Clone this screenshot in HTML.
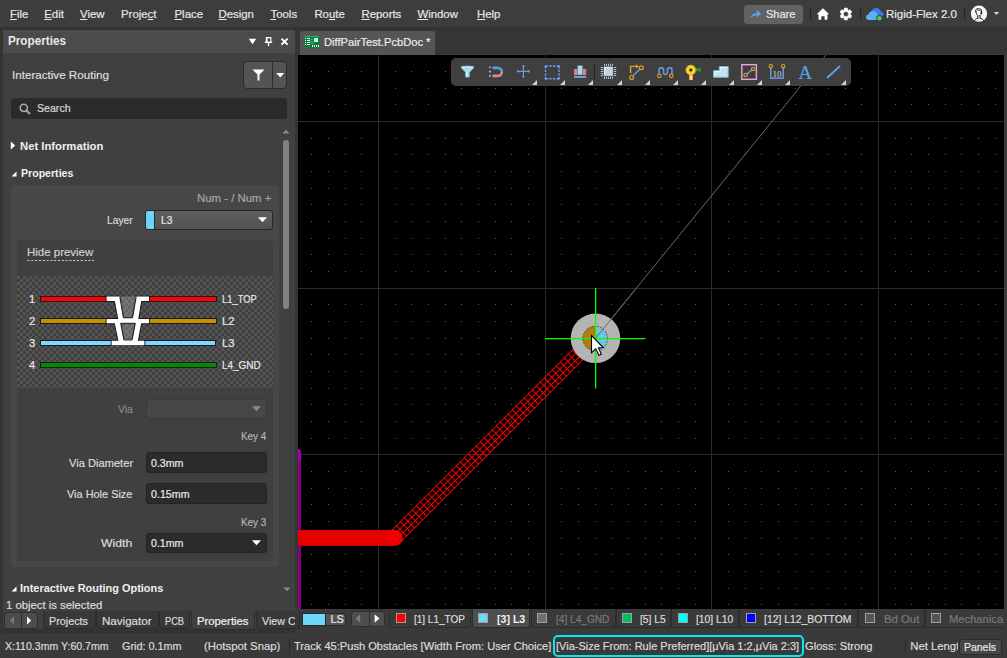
<!DOCTYPE html>
<html><head><meta charset="utf-8">
<style>
html,body{margin:0;padding:0;}
body{width:1007px;height:658px;position:relative;overflow:hidden;background:#2b2b2b;font-family:"Liberation Sans",sans-serif;}
body>div{position:absolute;}
.t{white-space:nowrap;-webkit-text-stroke:0.2px currentColor;}
.t.b{-webkit-text-stroke:0;}
u{text-decoration:underline;text-underline-offset:1px;}
</style></head><body>
<div style="left:0px;top:0px;width:1007px;height:27px;background:#3d3d3d;"></div>
<div style="left:0px;top:27px;width:1007px;height:3px;background:#333333;"></div>
<div style="left:298px;top:30px;width:709px;height:25px;background:#363636;"></div>
<div style="left:0px;top:30px;width:3px;height:603px;background:#353535;"></div>
<div style="left:3px;top:30px;width:292px;height:603px;background:#404040;"></div>
<div style="left:295px;top:30px;width:3px;height:579px;background:#353535;"></div>
<div style="left:295px;top:609px;width:3px;height:24px;background:#3a3a3a;"></div>
<div style="left:3px;top:30px;width:292px;height:23px;background:#4b4b4b;"></div>
<div style="left:298px;top:55px;width:706px;height:554px;background:#000000;"></div>
<div style="left:1004px;top:55px;width:3px;height:554px;background:#3a3a3a;"></div>
<div style="left:298px;top:609px;width:709px;height:24px;background:#3a3a3a;"></div>
<div style="left:0px;top:633px;width:1007px;height:25px;background:#3a3a3a;"></div>
<div class="t" style="left:10px;top:8.95px;font-size:11.4px;line-height:11.4px;color:#e6e6e6;font-weight:normal;"><u>F</u>ile</div>
<div class="t" style="left:44.2px;top:8.95px;font-size:11.4px;line-height:11.4px;color:#e6e6e6;font-weight:normal;"><u>E</u>dit</div>
<div class="t" style="left:80px;top:8.95px;font-size:11.4px;line-height:11.4px;color:#e6e6e6;font-weight:normal;"><u>V</u>iew</div>
<div class="t" style="left:121px;top:8.95px;font-size:11.4px;line-height:11.4px;color:#e6e6e6;font-weight:normal;">Proje<u>c</u>t</div>
<div class="t" style="left:174.5px;top:8.95px;font-size:11.4px;line-height:11.4px;color:#e6e6e6;font-weight:normal;"><u>P</u>lace</div>
<div class="t" style="left:218.4px;top:8.95px;font-size:11.4px;line-height:11.4px;color:#e6e6e6;font-weight:normal;"><u>D</u>esign</div>
<div class="t" style="left:270.5px;top:8.95px;font-size:11.4px;line-height:11.4px;color:#e6e6e6;font-weight:normal;"><u>T</u>ools</div>
<div class="t" style="left:314.4px;top:8.95px;font-size:11.4px;line-height:11.4px;color:#e6e6e6;font-weight:normal;">Ro<u>u</u>te</div>
<div class="t" style="left:361.4px;top:8.95px;font-size:11.4px;line-height:11.4px;color:#e6e6e6;font-weight:normal;"><u>R</u>eports</div>
<div class="t" style="left:417.4px;top:8.95px;font-size:11.4px;line-height:11.4px;color:#e6e6e6;font-weight:normal;"><u>W</u>indow</div>
<div class="t" style="left:477px;top:8.95px;font-size:11.4px;line-height:11.4px;color:#e6e6e6;font-weight:normal;"><u>H</u>elp</div>
<div style="left:744px;top:5px;width:59px;height:19px;background:#626262;border-radius:3px;"></div>
<svg style="position:absolute;left:750px;top:9px" width="12" height="10" viewBox="0 0 12 10"><path d="M0.3 9 C1.5 5.5 4 4.3 6.8 4.3 L6.8 1 L11.2 4.8 L6.8 8.6 L6.8 6.2 C4.2 6.2 2.2 7 0.3 9Z" fill="#4ea8f4"/></svg>
<div class="t" style="left:765.80px;top:8.38px;font-size:11.6px;line-height:11.6px;color:#e8e8e8;font-weight:normal;transform:scaleX(0.9492);transform-origin:0 0;">Share</div>
<div style="left:809.5px;top:8px;width:1.0px;height:12px;background:#242424;"></div>
<svg style="position:absolute;left:812px;top:3px" width="75" height="22" viewBox="812 3 75 22"><path d="M822.9 8.2 L829.2 14.2 H827.4 V19.8 H824.6 V16.3 H821.3 V19.8 H818.5 V14.2 H816.7Z" fill="#fff"/></svg>
<svg style="position:absolute;left:812px;top:3px" width="75" height="22" viewBox="812 3 75 22"><path d="M844.53 8.06 L847.27 8.06 L847.62 9.73 L848.73 10.38 L850.36 9.84 L851.73 12.22 L850.46 13.36 L850.46 14.64 L851.73 15.78 L850.36 18.16 L848.73 17.62 L847.62 18.27 L847.27 19.94 L844.53 19.94 L844.18 18.27 L843.07 17.62 L841.44 18.16 L840.07 15.78 L841.34 14.64 L841.34 13.36 L840.07 12.22 L841.44 9.84 L843.07 10.38 L844.18 9.73Z M848.5 14 A2.6 2.6 0 1 0 843.3 14 A2.6 2.6 0 1 0 848.5 14Z" fill="#fff" fill-rule="evenodd" stroke="#fff" stroke-width="0.6" stroke-linejoin="round"/></svg>
<div style="left:860px;top:8px;width:1px;height:12px;background:#242424;"></div>
<svg style="position:absolute;left:812px;top:3px" width="75" height="22" viewBox="812 3 75 22"><path d="M871 13 C871.3 10 873.5 8 876.2 8 C878.6 8 880.4 9.5 880.9 11.5 C882.6 11.7 883.5 13 883.3 14.6 C883.1 16 882 16.8 880.6 16.8 H873Z" fill="#3a7ee6"/><path d="M869 20.1 C867.2 20.1 866 18.9 866 17.3 C866 15.8 867.1 14.7 868.4 14.6 C868.8 12.4 870.6 10.9 872.9 10.9 C875.2 10.9 877 12.5 877.4 14.6 C879 14.7 880.3 16 880.2 17.5 C880.1 19 878.9 20.1 877.4 20.1Z" fill="#5ab0ea"/><circle cx="879.4" cy="18.2" r="3.1" fill="#3d3d3d"/><circle cx="879.4" cy="18.2" r="2.3" fill="#52c452"/></svg>
<div class="t" style="left:886.00px;top:8.38px;font-size:11.6px;line-height:11.6px;color:#e8e8e8;font-weight:normal;transform:scaleX(0.9920);transform-origin:0 0;">Rigid-Flex 2.0</div>
<div style="left:963.5px;top:8px;width:1.0px;height:12px;background:#242424;"></div>
<svg style="position:absolute;left:965px;top:0px" width="42" height="28" viewBox="965 0 42 28"><circle cx="979" cy="13.7" r="8.1" fill="#f6f6f6"/><g fill="none" stroke="#202020" stroke-width="0.9" stroke-linecap="round"><path d="M975.4 12 C975 9.8 976.3 8.6 978.3 8.6 C980.3 8.6 981.6 9.4 981.7 11"/><path d="M976.2 11.2 C976.1 13.6 976.6 15.4 978.8 16.2 C980.8 15.6 981.4 13.8 981.5 11.2"/><path d="M977.6 16 V18.2 M980.2 16 V18.2"/><path d="M974.2 20.6 C975.2 19 976.6 18.4 978.2 18.3 M979.8 18.3 C981.4 18.4 982.8 19 983.8 20.6"/><path d="M977.4 9.9 C978.6 10.5 980.2 10.4 981.2 10"/></g><ellipse cx="981.4" cy="12.8" rx="0.8" ry="1.5" fill="#202020"/><path d="M993.8 12 H999.1 L996.45 14.9Z" fill="#d8d8d8"/></svg>
<div style="left:300px;top:31px;width:135px;height:24px;background:#555555;border-radius:3px 3px 0 0;"></div>
<svg style="position:absolute;left:300px;top:32px" width="24" height="20" viewBox="300 32 24 20"><path d="M304 36 H320 V48 H311 V47 H304Z" fill="#0a7a40"/><path d="M304.5 36.5 H319.5" stroke="#2fc080" stroke-width="0.8"/><rect x="314" y="38" width="4" height="4" fill="#e8f4ee"/><rect x="315" y="39" width="2" height="2" fill="#bcd8c8"/><g fill="#f0f8f4"><rect x="305" y="38" width="1" height="1"/><rect x="305" y="40" width="1" height="1"/><rect x="305" y="42" width="1" height="1"/><rect x="305" y="44" width="1" height="1"/><rect x="307" y="38" width="3" height="1"/><rect x="307" y="40" width="3" height="1"/><rect x="307" y="42" width="3" height="1"/><rect x="307" y="44" width="3" height="1"/></g><g fill="#20c080"><rect x="310" y="39" width="3" height="1"/><rect x="310" y="41" width="3" height="1"/><rect x="311" y="43" width="3" height="1"/></g><g fill="#f8f4c0"><rect x="312" y="45" width="1" height="2"/><rect x="314" y="45" width="1" height="2"/><rect x="316" y="45" width="1" height="2"/><rect x="318" y="45" width="1" height="2"/></g></svg>
<div class="t" style="left:324.20px;top:35.88px;font-size:11.6px;line-height:11.6px;color:#ececec;font-weight:normal;transform:scaleX(0.9624);transform-origin:0 0;">DiffPairTest.PcbDoc *</div>
<div class="t b" style="left:8.00px;top:34.84px;font-size:12px;line-height:12px;color:#e8e8e8;font-weight:bold;transform:scaleX(0.9764);transform-origin:0 0;">Properties</div>
<svg style="position:absolute;left:248px;top:38px" width="9" height="7" viewBox="0 0 9 7"><path d="M0.8 0.8 H8.2 L4.5 6.2Z" fill="#fff"/></svg>
<svg style="position:absolute;left:264px;top:36px" width="9" height="11" viewBox="0 0 9 11"><path d="M1.8 1 H7.4 V6 H1.8Z M3.6 2.2 V6 H6.3 V2.2Z" fill="#fff" fill-rule="evenodd"/><rect x="0.8" y="5.6" width="7.4" height="1.4" fill="#fff"/><rect x="3.8" y="6.5" width="1.4" height="3.6" fill="#fff"/></svg>
<svg style="position:absolute;left:280px;top:37px" width="9" height="9" viewBox="0 0 9 9"><path d="M1.5 1.6 L7.6 7.6 M7.6 1.6 L1.5 7.6" stroke="#fff" stroke-width="2"/></svg>
<div class="t" style="left:11.60px;top:69.28px;font-size:11.6px;line-height:11.6px;color:#dedede;font-weight:normal;transform:scaleX(1.0026);transform-origin:0 0;">Interactive Routing</div>
<div style="left:243px;top:61px;width:44px;height:28px;background:#545454;border:1px solid #2c2c2c;border-radius:4px;box-sizing:border-box;"></div>
<div style="left:272px;top:62px;width:1px;height:26px;background:#2c2c2c;"></div>
<svg style="position:absolute;left:252px;top:69px" width="13" height="12" viewBox="0 0 13 12"><path d="M0.5 0.5 H12.5 L7.5 5.5 V11.5 H5.5 V5.5Z" fill="#fff"/></svg>
<svg style="position:absolute;left:275.5px;top:73px" width="9" height="5" viewBox="0 0 9 5"><path d="M0.2 0 H8.2 L4.2 4.4Z" fill="#fff"/></svg>
<div style="left:11px;top:98px;width:276px;height:21px;background:#2b2b2b;border-radius:3px;"></div>
<svg style="position:absolute;left:19px;top:103px" width="12" height="12" viewBox="0 0 12 12"><circle cx="4.8" cy="4.8" r="3.6" fill="none" stroke="#a8a8a8" stroke-width="1.6"/><path d="M7.5 7.5 L11 11" stroke="#a8a8a8" stroke-width="2"/></svg>
<div class="t" style="left:37.20px;top:101.98px;font-size:11.6px;line-height:11.6px;color:#dcdcdc;font-weight:normal;transform:scaleX(0.9137);transform-origin:0 0;">Search</div>
<svg style="position:absolute;left:282px;top:129px" width="8" height="5" viewBox="0 0 8 5"><path d="M0.5 4.5 H7.5 L4 0.8Z" fill="#8a8a8a"/></svg>
<div style="left:283px;top:140px;width:6px;height:169px;background:#828282;border-radius:3px;"></div>
<svg style="position:absolute;left:282.5px;top:587px" width="8" height="5" viewBox="0 0 8 5"><path d="M0.5 0.5 H7.5 L4 4.2Z" fill="#8a8a8a"/></svg>
<svg style="position:absolute;left:10px;top:141px" width="6" height="9" viewBox="0 0 6 9"><path d="M0.8 0.5 L5.2 4.5 L0.8 8.5Z" fill="#fff"/></svg>
<div class="t b" style="left:19.50px;top:140.38px;font-size:11.6px;line-height:11.6px;color:#f0f0f0;font-weight:bold;transform:scaleX(0.9729);transform-origin:0 0;">Net Information</div>
<svg style="position:absolute;left:11px;top:171px" width="6" height="6" viewBox="0 0 6 6"><path d="M5.5 0.5 V5.5 H0.5Z" fill="#fff"/></svg>
<div class="t b" style="left:20.60px;top:166.78px;font-size:11.6px;line-height:11.6px;color:#f0f0f0;font-weight:bold;transform:scaleX(0.9126);transform-origin:0 0;">Properties</div>
<div style="left:11px;top:185px;width:268px;height:382px;background:#474747;border-radius:3px;"></div>
<div class="t" style="left:197.20px;top:192.18px;font-size:11.6px;line-height:11.6px;color:#a6a6a6;font-weight:normal;transform:scaleX(0.9835);transform-origin:0 0;">Num - / Num +</div>
<div class="t" style="left:107.00px;top:213.88px;font-size:11.6px;line-height:11.6px;color:#dcdcdc;font-weight:normal;transform:scaleX(0.8828);transform-origin:0 0;">Layer</div>
<div style="left:145px;top:209.5px;width:127.5px;height:20.0px;background:linear-gradient(#5e5e5e,#525252);border:1px solid #262626;border-radius:3px;box-sizing:border-box;"></div>
<div style="left:146px;top:210.5px;width:8px;height:18.0px;background:#6dd3f7;border-radius:2px 0 0 2px;"></div>
<div style="left:154px;top:210.5px;width:1px;height:18.0px;background:#2a2a2a;"></div>
<div class="t" style="left:160.90px;top:213.68px;font-size:11.6px;line-height:11.6px;color:#e6e6e6;font-weight:normal;transform:scaleX(0.8776);transform-origin:0 0;">L3</div>
<svg style="position:absolute;left:258px;top:217px" width="9" height="6" viewBox="0 0 9 6"><path d="M0 0.3 H9 L4.5 5.3Z" fill="#fff"/></svg>
<div style="left:17px;top:240px;width:256px;height:320.5px;background:#404040;border-radius:3px;"></div>
<div class="t" style="left:27.40px;top:246.38px;font-size:11.6px;line-height:11.6px;color:#cfcfcf;font-weight:normal;transform:scaleX(0.9886);transform-origin:0 0;">Hide preview</div>
<svg style="position:absolute;left:27px;top:259px" width="68" height="2"><path d="M0.5 1.5 H67" stroke="#c4c4c4" stroke-width="1" stroke-dasharray="2.2 1.6"/></svg>
<svg style="position:absolute;left:17px;top:276px" width="256" height="112"><defs><pattern id="chk" width="6" height="6" patternUnits="userSpaceOnUse"><rect width="6" height="6" fill="#3f3f3f"/><rect x="0" y="0" width="3" height="3" fill="#545454"/><rect x="3" y="3" width="3" height="3" fill="#545454"/></pattern></defs><rect width="256" height="112" fill="url(#chk)"/></svg>
<div class="t" style="left:29px;top:293.72px;font-size:11.2px;line-height:11.2px;color:#e8e8e8;font-weight:normal;">1</div>
<div style="left:40.5px;top:296.7px;width:66.1px;height:4.5px;background:#ff0000;outline:1px solid #1a1a1a;"></div>
<div style="left:149px;top:296.7px;width:66.5px;height:4.5px;background:#ff0000;outline:1px solid #1a1a1a;"></div>
<div class="t" style="left:222.00px;top:293.38px;font-size:11.6px;line-height:11.6px;color:#e8e8e8;font-weight:normal;transform:scaleX(0.8086);transform-origin:0 0;">L1_TOP</div>
<div class="t" style="left:29px;top:315.72px;font-size:11.2px;line-height:11.2px;color:#e8e8e8;font-weight:normal;">2</div>
<div style="left:40.5px;top:318.7px;width:66.1px;height:4.5px;background:#c89000;outline:1px solid #1a1a1a;"></div>
<div style="left:149px;top:318.7px;width:66.5px;height:4.5px;background:#c89000;outline:1px solid #1a1a1a;"></div>
<div class="t" style="left:222.00px;top:315.38px;font-size:11.6px;line-height:11.6px;color:#e8e8e8;font-weight:normal;transform:scaleX(0.9708);transform-origin:0 0;">L2</div>
<div class="t" style="left:29px;top:337.72px;font-size:11.2px;line-height:11.2px;color:#e8e8e8;font-weight:normal;">3</div>
<div style="left:40.5px;top:340.7px;width:71.1px;height:4.5px;background:#7fd8ff;outline:1px solid #1a1a1a;"></div>
<div style="left:144.4px;top:340.7px;width:71.1px;height:4.5px;background:#7fd8ff;outline:1px solid #1a1a1a;"></div>
<div class="t" style="left:222.00px;top:337.38px;font-size:11.6px;line-height:11.6px;color:#e8e8e8;font-weight:normal;transform:scaleX(0.9708);transform-origin:0 0;">L3</div>
<div class="t" style="left:29px;top:359.72px;font-size:11.2px;line-height:11.2px;color:#e8e8e8;font-weight:normal;">4</div>
<div style="left:40.5px;top:362.7px;width:175.0px;height:4.5px;background:#008a00;outline:1px solid #1a1a1a;"></div>
<div class="t" style="left:222.00px;top:359.38px;font-size:11.6px;line-height:11.6px;color:#e8e8e8;font-weight:normal;transform:scaleX(0.8554);transform-origin:0 0;">L4_GND</div>
<svg style="position:absolute;left:95px;top:280px" width="60" height="75" viewBox="95 280 60 75"><path d="M106.6 296.6 H120.3 V301 H106.6Z M135.7 296.6 H149 V301 H135.7Z M114 296.6 L119.8 296.6 L123.4 317.8 L123.4 321 L118.6 321Z M136.2 296.6 L141.9 296.6 L138 321 L132.6 321 L132.6 317.8Z M123 317.8 H133 V320 H123Z M106.6 319 H149 V323.3 H106.6Z M113.9 319 L120.7 319 L120.7 323.3 L123.9 340 L123.9 342 L118.7 342Z M135.3 319 L142 319 L137.6 342 L132.1 342 L132.1 340 L135.3 323.3Z M123.5 339.5 H132.5 V342 H123.5Z M111.6 340.8 H144.4 V345.2 H111.6Z" fill="#fff" stroke="#161616" stroke-width="1.8" stroke-linejoin="miter"/><path d="M106.6 296.6 H120.3 V301 H106.6Z M135.7 296.6 H149 V301 H135.7Z M114 296.6 L119.8 296.6 L123.4 317.8 L123.4 321 L118.6 321Z M136.2 296.6 L141.9 296.6 L138 321 L132.6 321 L132.6 317.8Z M123 317.8 H133 V320 H123Z M106.6 319 H149 V323.3 H106.6Z M113.9 319 L120.7 319 L120.7 323.3 L123.9 340 L123.9 342 L118.7 342Z M135.3 319 L142 319 L137.6 342 L132.1 342 L132.1 340 L135.3 323.3Z M123.5 339.5 H132.5 V342 H123.5Z M111.6 340.8 H144.4 V345.2 H111.6Z" fill="#fff"/><path d="M119.8 296.6 L136.2 296.6 L132.6 317.8 L123.4 317.8Z" fill="#a8a8a8" fill-opacity="0.4"/><path d="M120.7 323.3 L135.3 323.3 L132.1 340 L123.9 340Z" fill="#a8a8a8" fill-opacity="0.4"/><path d="M119.8 296.6 L123.4 317.8 L132.6 317.8 L136.2 296.6" fill="none" stroke="#161616" stroke-width="0.9"/><path d="M120.7 323.3 L135.3 323.3 L132.1 340 L123.9 340Z" fill="none" stroke="#161616" stroke-width="0.9"/></svg>
<div class="t" style="left:117.70px;top:403.18px;font-size:11.6px;line-height:11.6px;color:#8a8a8a;font-weight:normal;transform:scaleX(0.8982);transform-origin:0 0;">Via</div>
<div style="left:145.5px;top:398.5px;width:121.0px;height:20.0px;background:#474747;border:1px solid #3a3a3a;border-radius:3px;box-sizing:border-box;"></div>
<svg style="position:absolute;left:252px;top:406px" width="9" height="6" viewBox="0 0 9 6"><path d="M0 0.3 H9 L4.5 5.3Z" fill="#8a8a8a"/></svg>
<div class="t" style="left:241.30px;top:430.18px;font-size:11.6px;line-height:11.6px;color:#b4b4b4;font-weight:normal;transform:scaleX(0.8520);transform-origin:0 0;">Key 4</div>
<div class="t" style="left:68.50px;top:457.08px;font-size:11.6px;line-height:11.6px;color:#dcdcdc;font-weight:normal;transform:scaleX(0.9594);transform-origin:0 0;">Via Diameter</div>
<div style="left:145.5px;top:452px;width:121.0px;height:21px;background:#2b2b2b;border:1px solid #232323;border-radius:3px;box-sizing:border-box;"></div>
<div class="t" style="left:151.30px;top:457.08px;font-size:11.6px;line-height:11.6px;color:#ececec;font-weight:normal;transform:scaleX(0.9156);transform-origin:0 0;">0.3mm</div>
<div class="t" style="left:67.20px;top:488.28px;font-size:11.6px;line-height:11.6px;color:#dcdcdc;font-weight:normal;transform:scaleX(0.9428);transform-origin:0 0;">Via Hole Size</div>
<div style="left:145.5px;top:483px;width:121.0px;height:21px;background:#2b2b2b;border:1px solid #232323;border-radius:3px;box-sizing:border-box;"></div>
<div class="t" style="left:151.30px;top:488.28px;font-size:11.6px;line-height:11.6px;color:#ececec;font-weight:normal;transform:scaleX(0.9194);transform-origin:0 0;">0.15mm</div>
<div class="t" style="left:241.30px;top:515.68px;font-size:11.6px;line-height:11.6px;color:#b4b4b4;font-weight:normal;transform:scaleX(0.8520);transform-origin:0 0;">Key 3</div>
<div class="t" style="left:101.30px;top:537.48px;font-size:11.6px;line-height:11.6px;color:#dcdcdc;font-weight:normal;transform:scaleX(1.0540);transform-origin:0 0;">Width</div>
<div style="left:145.5px;top:532.5px;width:121.0px;height:20.5px;background:#2b2b2b;border:1px solid #232323;border-radius:3px;box-sizing:border-box;"></div>
<div class="t" style="left:151.30px;top:537.48px;font-size:11.6px;line-height:11.6px;color:#ececec;font-weight:normal;transform:scaleX(0.9156);transform-origin:0 0;">0.1mm</div>
<svg style="position:absolute;left:252px;top:540px" width="9" height="6" viewBox="0 0 9 6"><path d="M0 0.3 H9 L4.5 5.3Z" fill="#fff"/></svg>
<svg style="position:absolute;left:11px;top:586px" width="6" height="6" viewBox="0 0 6 6"><path d="M5.5 0.5 V5.5 H0.5Z" fill="#fff"/></svg>
<div class="t b" style="left:19.70px;top:581.88px;font-size:11.6px;line-height:11.6px;color:#f0f0f0;font-weight:bold;transform:scaleX(0.9423);transform-origin:0 0;">Interactive Routing Options</div>
<div class="t" style="left:6.40px;top:598.88px;font-size:11.6px;line-height:11.6px;color:#dcdcdc;font-weight:normal;transform:scaleX(0.9757);transform-origin:0 0;">1 object is selected</div>
<div style="left:3px;top:629px;width:292px;height:4px;background:#333333;"></div>
<div style="left:4px;top:612px;width:34px;height:17px;background:#4c4c4c;border:1px solid #2e2e2e;border-radius:3px;box-sizing:border-box;"></div>
<div style="left:21px;top:613px;width:1px;height:15px;background:#2e2e2e;"></div>
<svg style="position:absolute;left:9px;top:616px" width="6" height="9" viewBox="0 0 6 9"><path d="M5 0.5 V8.5 L0.8 4.5Z" fill="#7a7a7a"/></svg>
<svg style="position:absolute;left:26px;top:616px" width="6" height="9" viewBox="0 0 6 9"><path d="M1 0.5 V8.5 L5.2 4.5Z" fill="#fff"/></svg>
<div style="left:43px;top:611px;width:52.5px;height:18px;background:#383838;border:1px solid #2c2c2c;border-top:none;border-radius:0 0 3px 3px;box-sizing:border-box;"></div>
<div class="t" style="left:49.30px;top:614.68px;font-size:11.6px;line-height:11.6px;color:#dcdcdc;font-weight:normal;transform:scaleX(0.9313);transform-origin:0 0;">Projects</div>
<div style="left:96px;top:611px;width:62.5px;height:18px;background:#383838;border:1px solid #2c2c2c;border-top:none;border-radius:0 0 3px 3px;box-sizing:border-box;"></div>
<div class="t" style="left:102.30px;top:614.68px;font-size:11.6px;line-height:11.6px;color:#dcdcdc;font-weight:normal;transform:scaleX(0.9990);transform-origin:0 0;">Navigator</div>
<div style="left:158.7px;top:611px;width:31.80000000000001px;height:18px;background:#383838;border:1px solid #2c2c2c;border-top:none;border-radius:0 0 3px 3px;box-sizing:border-box;"></div>
<div class="t" style="left:165.20px;top:614.68px;font-size:11.6px;line-height:11.6px;color:#dcdcdc;font-weight:normal;transform:scaleX(0.7993);transform-origin:0 0;">PCB</div>
<div style="left:190.5px;top:611px;width:64.5px;height:18.5px;background:#404040;border:1px solid #2c2c2c;border-top:none;border-radius:0 0 3px 3px;box-sizing:border-box;"></div>
<div class="t" style="left:197.00px;top:614.68px;font-size:11.6px;line-height:11.6px;color:#f2f2f2;font-weight:normal;transform:scaleX(0.9736);transform-origin:0 0;">Properties</div>
<div style="left:255.7px;top:611px;width:44.30000000000001px;height:18px;background:#383838;border:1px solid #2c2c2c;border-top:none;border-radius:0 0 3px 3px;box-sizing:border-box;"></div>
<div style="position:absolute;left:256px;top:611px;width:39px;height:18px;overflow:hidden;"><div class="t" style="position:absolute;left:6px;top:3.68px;font-size:11.6px;line-height:11.6px;color:#dcdcdc;transform:scaleX(0.92);transform-origin:0 0;">View Configuration</div></div>
<svg style="position:absolute;left:298px;top:55px" width="706" height="554"><path d="M13 16h1v1h-1zM13 33h1v1h-1zM13 49h1v1h-1zM13 66h1v1h-1zM13 83h1v1h-1zM13 99h1v1h-1zM13 116h1v1h-1zM13 133h1v1h-1zM13 149h1v1h-1zM13 166h1v1h-1zM13 183h1v1h-1zM13 199h1v1h-1zM13 216h1v1h-1zM13 233h1v1h-1zM13 249h1v1h-1zM13 266h1v1h-1zM13 283h1v1h-1zM13 299h1v1h-1zM13 316h1v1h-1zM13 333h1v1h-1zM13 349h1v1h-1zM13 366h1v1h-1zM13 383h1v1h-1zM13 399h1v1h-1zM13 416h1v1h-1zM13 433h1v1h-1zM13 449h1v1h-1zM13 466h1v1h-1zM13 483h1v1h-1zM13 499h1v1h-1zM13 516h1v1h-1zM13 533h1v1h-1zM13 549h1v1h-1zM30 16h1v1h-1zM30 33h1v1h-1zM30 49h1v1h-1zM30 66h1v1h-1zM30 83h1v1h-1zM30 99h1v1h-1zM30 116h1v1h-1zM30 133h1v1h-1zM30 149h1v1h-1zM30 166h1v1h-1zM30 183h1v1h-1zM30 199h1v1h-1zM30 216h1v1h-1zM30 233h1v1h-1zM30 249h1v1h-1zM30 266h1v1h-1zM30 283h1v1h-1zM30 299h1v1h-1zM30 316h1v1h-1zM30 333h1v1h-1zM30 349h1v1h-1zM30 366h1v1h-1zM30 383h1v1h-1zM30 399h1v1h-1zM30 416h1v1h-1zM30 433h1v1h-1zM30 449h1v1h-1zM30 466h1v1h-1zM30 483h1v1h-1zM30 499h1v1h-1zM30 516h1v1h-1zM30 533h1v1h-1zM30 549h1v1h-1zM47 16h1v1h-1zM47 33h1v1h-1zM47 49h1v1h-1zM47 66h1v1h-1zM47 83h1v1h-1zM47 99h1v1h-1zM47 116h1v1h-1zM47 133h1v1h-1zM47 149h1v1h-1zM47 166h1v1h-1zM47 183h1v1h-1zM47 199h1v1h-1zM47 216h1v1h-1zM47 233h1v1h-1zM47 249h1v1h-1zM47 266h1v1h-1zM47 283h1v1h-1zM47 299h1v1h-1zM47 316h1v1h-1zM47 333h1v1h-1zM47 349h1v1h-1zM47 366h1v1h-1zM47 383h1v1h-1zM47 399h1v1h-1zM47 416h1v1h-1zM47 433h1v1h-1zM47 449h1v1h-1zM47 466h1v1h-1zM47 483h1v1h-1zM47 499h1v1h-1zM47 516h1v1h-1zM47 533h1v1h-1zM47 549h1v1h-1zM63 16h1v1h-1zM63 33h1v1h-1zM63 49h1v1h-1zM63 66h1v1h-1zM63 83h1v1h-1zM63 99h1v1h-1zM63 116h1v1h-1zM63 133h1v1h-1zM63 149h1v1h-1zM63 166h1v1h-1zM63 183h1v1h-1zM63 199h1v1h-1zM63 216h1v1h-1zM63 233h1v1h-1zM63 249h1v1h-1zM63 266h1v1h-1zM63 283h1v1h-1zM63 299h1v1h-1zM63 316h1v1h-1zM63 333h1v1h-1zM63 349h1v1h-1zM63 366h1v1h-1zM63 383h1v1h-1zM63 399h1v1h-1zM63 416h1v1h-1zM63 433h1v1h-1zM63 449h1v1h-1zM63 466h1v1h-1zM63 483h1v1h-1zM63 499h1v1h-1zM63 516h1v1h-1zM63 533h1v1h-1zM63 549h1v1h-1zM80 16h1v1h-1zM80 33h1v1h-1zM80 49h1v1h-1zM80 66h1v1h-1zM80 83h1v1h-1zM80 99h1v1h-1zM80 116h1v1h-1zM80 133h1v1h-1zM80 149h1v1h-1zM80 166h1v1h-1zM80 183h1v1h-1zM80 199h1v1h-1zM80 216h1v1h-1zM80 233h1v1h-1zM80 249h1v1h-1zM80 266h1v1h-1zM80 283h1v1h-1zM80 299h1v1h-1zM80 316h1v1h-1zM80 333h1v1h-1zM80 349h1v1h-1zM80 366h1v1h-1zM80 383h1v1h-1zM80 399h1v1h-1zM80 416h1v1h-1zM80 433h1v1h-1zM80 449h1v1h-1zM80 466h1v1h-1zM80 483h1v1h-1zM80 499h1v1h-1zM80 516h1v1h-1zM80 533h1v1h-1zM80 549h1v1h-1zM97 16h1v1h-1zM97 33h1v1h-1zM97 49h1v1h-1zM97 66h1v1h-1zM97 83h1v1h-1zM97 99h1v1h-1zM97 116h1v1h-1zM97 133h1v1h-1zM97 149h1v1h-1zM97 166h1v1h-1zM97 183h1v1h-1zM97 199h1v1h-1zM97 216h1v1h-1zM97 233h1v1h-1zM97 249h1v1h-1zM97 266h1v1h-1zM97 283h1v1h-1zM97 299h1v1h-1zM97 316h1v1h-1zM97 333h1v1h-1zM97 349h1v1h-1zM97 366h1v1h-1zM97 383h1v1h-1zM97 399h1v1h-1zM97 416h1v1h-1zM97 433h1v1h-1zM97 449h1v1h-1zM97 466h1v1h-1zM97 483h1v1h-1zM97 499h1v1h-1zM97 516h1v1h-1zM97 533h1v1h-1zM97 549h1v1h-1zM113 16h1v1h-1zM113 33h1v1h-1zM113 49h1v1h-1zM113 66h1v1h-1zM113 83h1v1h-1zM113 99h1v1h-1zM113 116h1v1h-1zM113 133h1v1h-1zM113 149h1v1h-1zM113 166h1v1h-1zM113 183h1v1h-1zM113 199h1v1h-1zM113 216h1v1h-1zM113 233h1v1h-1zM113 249h1v1h-1zM113 266h1v1h-1zM113 283h1v1h-1zM113 299h1v1h-1zM113 316h1v1h-1zM113 333h1v1h-1zM113 349h1v1h-1zM113 366h1v1h-1zM113 383h1v1h-1zM113 399h1v1h-1zM113 416h1v1h-1zM113 433h1v1h-1zM113 449h1v1h-1zM113 466h1v1h-1zM113 483h1v1h-1zM113 499h1v1h-1zM113 516h1v1h-1zM113 533h1v1h-1zM113 549h1v1h-1zM130 16h1v1h-1zM130 33h1v1h-1zM130 49h1v1h-1zM130 66h1v1h-1zM130 83h1v1h-1zM130 99h1v1h-1zM130 116h1v1h-1zM130 133h1v1h-1zM130 149h1v1h-1zM130 166h1v1h-1zM130 183h1v1h-1zM130 199h1v1h-1zM130 216h1v1h-1zM130 233h1v1h-1zM130 249h1v1h-1zM130 266h1v1h-1zM130 283h1v1h-1zM130 299h1v1h-1zM130 316h1v1h-1zM130 333h1v1h-1zM130 349h1v1h-1zM130 366h1v1h-1zM130 383h1v1h-1zM130 399h1v1h-1zM130 416h1v1h-1zM130 433h1v1h-1zM130 449h1v1h-1zM130 466h1v1h-1zM130 483h1v1h-1zM130 499h1v1h-1zM130 516h1v1h-1zM130 533h1v1h-1zM130 549h1v1h-1zM147 16h1v1h-1zM147 33h1v1h-1zM147 49h1v1h-1zM147 66h1v1h-1zM147 83h1v1h-1zM147 99h1v1h-1zM147 116h1v1h-1zM147 133h1v1h-1zM147 149h1v1h-1zM147 166h1v1h-1zM147 183h1v1h-1zM147 199h1v1h-1zM147 216h1v1h-1zM147 233h1v1h-1zM147 249h1v1h-1zM147 266h1v1h-1zM147 283h1v1h-1zM147 299h1v1h-1zM147 316h1v1h-1zM147 333h1v1h-1zM147 349h1v1h-1zM147 366h1v1h-1zM147 383h1v1h-1zM147 399h1v1h-1zM147 416h1v1h-1zM147 433h1v1h-1zM147 449h1v1h-1zM147 466h1v1h-1zM147 483h1v1h-1zM147 499h1v1h-1zM147 516h1v1h-1zM147 533h1v1h-1zM147 549h1v1h-1zM163 16h1v1h-1zM163 33h1v1h-1zM163 49h1v1h-1zM163 66h1v1h-1zM163 83h1v1h-1zM163 99h1v1h-1zM163 116h1v1h-1zM163 133h1v1h-1zM163 149h1v1h-1zM163 166h1v1h-1zM163 183h1v1h-1zM163 199h1v1h-1zM163 216h1v1h-1zM163 233h1v1h-1zM163 249h1v1h-1zM163 266h1v1h-1zM163 283h1v1h-1zM163 299h1v1h-1zM163 316h1v1h-1zM163 333h1v1h-1zM163 349h1v1h-1zM163 366h1v1h-1zM163 383h1v1h-1zM163 399h1v1h-1zM163 416h1v1h-1zM163 433h1v1h-1zM163 449h1v1h-1zM163 466h1v1h-1zM163 483h1v1h-1zM163 499h1v1h-1zM163 516h1v1h-1zM163 533h1v1h-1zM163 549h1v1h-1zM180 16h1v1h-1zM180 33h1v1h-1zM180 49h1v1h-1zM180 66h1v1h-1zM180 83h1v1h-1zM180 99h1v1h-1zM180 116h1v1h-1zM180 133h1v1h-1zM180 149h1v1h-1zM180 166h1v1h-1zM180 183h1v1h-1zM180 199h1v1h-1zM180 216h1v1h-1zM180 233h1v1h-1zM180 249h1v1h-1zM180 266h1v1h-1zM180 283h1v1h-1zM180 299h1v1h-1zM180 316h1v1h-1zM180 333h1v1h-1zM180 349h1v1h-1zM180 366h1v1h-1zM180 383h1v1h-1zM180 399h1v1h-1zM180 416h1v1h-1zM180 433h1v1h-1zM180 449h1v1h-1zM180 466h1v1h-1zM180 483h1v1h-1zM180 499h1v1h-1zM180 516h1v1h-1zM180 533h1v1h-1zM180 549h1v1h-1zM197 16h1v1h-1zM197 33h1v1h-1zM197 49h1v1h-1zM197 66h1v1h-1zM197 83h1v1h-1zM197 99h1v1h-1zM197 116h1v1h-1zM197 133h1v1h-1zM197 149h1v1h-1zM197 166h1v1h-1zM197 183h1v1h-1zM197 199h1v1h-1zM197 216h1v1h-1zM197 233h1v1h-1zM197 249h1v1h-1zM197 266h1v1h-1zM197 283h1v1h-1zM197 299h1v1h-1zM197 316h1v1h-1zM197 333h1v1h-1zM197 349h1v1h-1zM197 366h1v1h-1zM197 383h1v1h-1zM197 399h1v1h-1zM197 416h1v1h-1zM197 433h1v1h-1zM197 449h1v1h-1zM197 466h1v1h-1zM197 483h1v1h-1zM197 499h1v1h-1zM197 516h1v1h-1zM197 533h1v1h-1zM197 549h1v1h-1zM213 16h1v1h-1zM213 33h1v1h-1zM213 49h1v1h-1zM213 66h1v1h-1zM213 83h1v1h-1zM213 99h1v1h-1zM213 116h1v1h-1zM213 133h1v1h-1zM213 149h1v1h-1zM213 166h1v1h-1zM213 183h1v1h-1zM213 199h1v1h-1zM213 216h1v1h-1zM213 233h1v1h-1zM213 249h1v1h-1zM213 266h1v1h-1zM213 283h1v1h-1zM213 299h1v1h-1zM213 316h1v1h-1zM213 333h1v1h-1zM213 349h1v1h-1zM213 366h1v1h-1zM213 383h1v1h-1zM213 399h1v1h-1zM213 416h1v1h-1zM213 433h1v1h-1zM213 449h1v1h-1zM213 466h1v1h-1zM213 483h1v1h-1zM213 499h1v1h-1zM213 516h1v1h-1zM213 533h1v1h-1zM213 549h1v1h-1zM230 16h1v1h-1zM230 33h1v1h-1zM230 49h1v1h-1zM230 66h1v1h-1zM230 83h1v1h-1zM230 99h1v1h-1zM230 116h1v1h-1zM230 133h1v1h-1zM230 149h1v1h-1zM230 166h1v1h-1zM230 183h1v1h-1zM230 199h1v1h-1zM230 216h1v1h-1zM230 233h1v1h-1zM230 249h1v1h-1zM230 266h1v1h-1zM230 283h1v1h-1zM230 299h1v1h-1zM230 316h1v1h-1zM230 333h1v1h-1zM230 349h1v1h-1zM230 366h1v1h-1zM230 383h1v1h-1zM230 399h1v1h-1zM230 416h1v1h-1zM230 433h1v1h-1zM230 449h1v1h-1zM230 466h1v1h-1zM230 483h1v1h-1zM230 499h1v1h-1zM230 516h1v1h-1zM230 533h1v1h-1zM230 549h1v1h-1zM247 16h1v1h-1zM247 33h1v1h-1zM247 49h1v1h-1zM247 66h1v1h-1zM247 83h1v1h-1zM247 99h1v1h-1zM247 116h1v1h-1zM247 133h1v1h-1zM247 149h1v1h-1zM247 166h1v1h-1zM247 183h1v1h-1zM247 199h1v1h-1zM247 216h1v1h-1zM247 233h1v1h-1zM247 249h1v1h-1zM247 266h1v1h-1zM247 283h1v1h-1zM247 299h1v1h-1zM247 316h1v1h-1zM247 333h1v1h-1zM247 349h1v1h-1zM247 366h1v1h-1zM247 383h1v1h-1zM247 399h1v1h-1zM247 416h1v1h-1zM247 433h1v1h-1zM247 449h1v1h-1zM247 466h1v1h-1zM247 483h1v1h-1zM247 499h1v1h-1zM247 516h1v1h-1zM247 533h1v1h-1zM247 549h1v1h-1zM263 16h1v1h-1zM263 33h1v1h-1zM263 49h1v1h-1zM263 66h1v1h-1zM263 83h1v1h-1zM263 99h1v1h-1zM263 116h1v1h-1zM263 133h1v1h-1zM263 149h1v1h-1zM263 166h1v1h-1zM263 183h1v1h-1zM263 199h1v1h-1zM263 216h1v1h-1zM263 233h1v1h-1zM263 249h1v1h-1zM263 266h1v1h-1zM263 283h1v1h-1zM263 299h1v1h-1zM263 316h1v1h-1zM263 333h1v1h-1zM263 349h1v1h-1zM263 366h1v1h-1zM263 383h1v1h-1zM263 399h1v1h-1zM263 416h1v1h-1zM263 433h1v1h-1zM263 449h1v1h-1zM263 466h1v1h-1zM263 483h1v1h-1zM263 499h1v1h-1zM263 516h1v1h-1zM263 533h1v1h-1zM263 549h1v1h-1zM280 16h1v1h-1zM280 33h1v1h-1zM280 49h1v1h-1zM280 66h1v1h-1zM280 83h1v1h-1zM280 99h1v1h-1zM280 116h1v1h-1zM280 133h1v1h-1zM280 149h1v1h-1zM280 166h1v1h-1zM280 183h1v1h-1zM280 199h1v1h-1zM280 216h1v1h-1zM280 233h1v1h-1zM280 249h1v1h-1zM280 266h1v1h-1zM280 283h1v1h-1zM280 299h1v1h-1zM280 316h1v1h-1zM280 333h1v1h-1zM280 349h1v1h-1zM280 366h1v1h-1zM280 383h1v1h-1zM280 399h1v1h-1zM280 416h1v1h-1zM280 433h1v1h-1zM280 449h1v1h-1zM280 466h1v1h-1zM280 483h1v1h-1zM280 499h1v1h-1zM280 516h1v1h-1zM280 533h1v1h-1zM280 549h1v1h-1zM297 16h1v1h-1zM297 33h1v1h-1zM297 49h1v1h-1zM297 66h1v1h-1zM297 83h1v1h-1zM297 99h1v1h-1zM297 116h1v1h-1zM297 133h1v1h-1zM297 149h1v1h-1zM297 166h1v1h-1zM297 183h1v1h-1zM297 199h1v1h-1zM297 216h1v1h-1zM297 233h1v1h-1zM297 249h1v1h-1zM297 266h1v1h-1zM297 283h1v1h-1zM297 299h1v1h-1zM297 316h1v1h-1zM297 333h1v1h-1zM297 349h1v1h-1zM297 366h1v1h-1zM297 383h1v1h-1zM297 399h1v1h-1zM297 416h1v1h-1zM297 433h1v1h-1zM297 449h1v1h-1zM297 466h1v1h-1zM297 483h1v1h-1zM297 499h1v1h-1zM297 516h1v1h-1zM297 533h1v1h-1zM297 549h1v1h-1zM313 16h1v1h-1zM313 33h1v1h-1zM313 49h1v1h-1zM313 66h1v1h-1zM313 83h1v1h-1zM313 99h1v1h-1zM313 116h1v1h-1zM313 133h1v1h-1zM313 149h1v1h-1zM313 166h1v1h-1zM313 183h1v1h-1zM313 199h1v1h-1zM313 216h1v1h-1zM313 233h1v1h-1zM313 249h1v1h-1zM313 266h1v1h-1zM313 283h1v1h-1zM313 299h1v1h-1zM313 316h1v1h-1zM313 333h1v1h-1zM313 349h1v1h-1zM313 366h1v1h-1zM313 383h1v1h-1zM313 399h1v1h-1zM313 416h1v1h-1zM313 433h1v1h-1zM313 449h1v1h-1zM313 466h1v1h-1zM313 483h1v1h-1zM313 499h1v1h-1zM313 516h1v1h-1zM313 533h1v1h-1zM313 549h1v1h-1zM330 16h1v1h-1zM330 33h1v1h-1zM330 49h1v1h-1zM330 66h1v1h-1zM330 83h1v1h-1zM330 99h1v1h-1zM330 116h1v1h-1zM330 133h1v1h-1zM330 149h1v1h-1zM330 166h1v1h-1zM330 183h1v1h-1zM330 199h1v1h-1zM330 216h1v1h-1zM330 233h1v1h-1zM330 249h1v1h-1zM330 266h1v1h-1zM330 283h1v1h-1zM330 299h1v1h-1zM330 316h1v1h-1zM330 333h1v1h-1zM330 349h1v1h-1zM330 366h1v1h-1zM330 383h1v1h-1zM330 399h1v1h-1zM330 416h1v1h-1zM330 433h1v1h-1zM330 449h1v1h-1zM330 466h1v1h-1zM330 483h1v1h-1zM330 499h1v1h-1zM330 516h1v1h-1zM330 533h1v1h-1zM330 549h1v1h-1zM347 16h1v1h-1zM347 33h1v1h-1zM347 49h1v1h-1zM347 66h1v1h-1zM347 83h1v1h-1zM347 99h1v1h-1zM347 116h1v1h-1zM347 133h1v1h-1zM347 149h1v1h-1zM347 166h1v1h-1zM347 183h1v1h-1zM347 199h1v1h-1zM347 216h1v1h-1zM347 233h1v1h-1zM347 249h1v1h-1zM347 266h1v1h-1zM347 283h1v1h-1zM347 299h1v1h-1zM347 316h1v1h-1zM347 333h1v1h-1zM347 349h1v1h-1zM347 366h1v1h-1zM347 383h1v1h-1zM347 399h1v1h-1zM347 416h1v1h-1zM347 433h1v1h-1zM347 449h1v1h-1zM347 466h1v1h-1zM347 483h1v1h-1zM347 499h1v1h-1zM347 516h1v1h-1zM347 533h1v1h-1zM347 549h1v1h-1zM363 16h1v1h-1zM363 33h1v1h-1zM363 49h1v1h-1zM363 66h1v1h-1zM363 83h1v1h-1zM363 99h1v1h-1zM363 116h1v1h-1zM363 133h1v1h-1zM363 149h1v1h-1zM363 166h1v1h-1zM363 183h1v1h-1zM363 199h1v1h-1zM363 216h1v1h-1zM363 233h1v1h-1zM363 249h1v1h-1zM363 266h1v1h-1zM363 283h1v1h-1zM363 299h1v1h-1zM363 316h1v1h-1zM363 333h1v1h-1zM363 349h1v1h-1zM363 366h1v1h-1zM363 383h1v1h-1zM363 399h1v1h-1zM363 416h1v1h-1zM363 433h1v1h-1zM363 449h1v1h-1zM363 466h1v1h-1zM363 483h1v1h-1zM363 499h1v1h-1zM363 516h1v1h-1zM363 533h1v1h-1zM363 549h1v1h-1zM380 16h1v1h-1zM380 33h1v1h-1zM380 49h1v1h-1zM380 66h1v1h-1zM380 83h1v1h-1zM380 99h1v1h-1zM380 116h1v1h-1zM380 133h1v1h-1zM380 149h1v1h-1zM380 166h1v1h-1zM380 183h1v1h-1zM380 199h1v1h-1zM380 216h1v1h-1zM380 233h1v1h-1zM380 249h1v1h-1zM380 266h1v1h-1zM380 283h1v1h-1zM380 299h1v1h-1zM380 316h1v1h-1zM380 333h1v1h-1zM380 349h1v1h-1zM380 366h1v1h-1zM380 383h1v1h-1zM380 399h1v1h-1zM380 416h1v1h-1zM380 433h1v1h-1zM380 449h1v1h-1zM380 466h1v1h-1zM380 483h1v1h-1zM380 499h1v1h-1zM380 516h1v1h-1zM380 533h1v1h-1zM380 549h1v1h-1zM397 16h1v1h-1zM397 33h1v1h-1zM397 49h1v1h-1zM397 66h1v1h-1zM397 83h1v1h-1zM397 99h1v1h-1zM397 116h1v1h-1zM397 133h1v1h-1zM397 149h1v1h-1zM397 166h1v1h-1zM397 183h1v1h-1zM397 199h1v1h-1zM397 216h1v1h-1zM397 233h1v1h-1zM397 249h1v1h-1zM397 266h1v1h-1zM397 283h1v1h-1zM397 299h1v1h-1zM397 316h1v1h-1zM397 333h1v1h-1zM397 349h1v1h-1zM397 366h1v1h-1zM397 383h1v1h-1zM397 399h1v1h-1zM397 416h1v1h-1zM397 433h1v1h-1zM397 449h1v1h-1zM397 466h1v1h-1zM397 483h1v1h-1zM397 499h1v1h-1zM397 516h1v1h-1zM397 533h1v1h-1zM397 549h1v1h-1zM413 16h1v1h-1zM413 33h1v1h-1zM413 49h1v1h-1zM413 66h1v1h-1zM413 83h1v1h-1zM413 99h1v1h-1zM413 116h1v1h-1zM413 133h1v1h-1zM413 149h1v1h-1zM413 166h1v1h-1zM413 183h1v1h-1zM413 199h1v1h-1zM413 216h1v1h-1zM413 233h1v1h-1zM413 249h1v1h-1zM413 266h1v1h-1zM413 283h1v1h-1zM413 299h1v1h-1zM413 316h1v1h-1zM413 333h1v1h-1zM413 349h1v1h-1zM413 366h1v1h-1zM413 383h1v1h-1zM413 399h1v1h-1zM413 416h1v1h-1zM413 433h1v1h-1zM413 449h1v1h-1zM413 466h1v1h-1zM413 483h1v1h-1zM413 499h1v1h-1zM413 516h1v1h-1zM413 533h1v1h-1zM413 549h1v1h-1zM430 16h1v1h-1zM430 33h1v1h-1zM430 49h1v1h-1zM430 66h1v1h-1zM430 83h1v1h-1zM430 99h1v1h-1zM430 116h1v1h-1zM430 133h1v1h-1zM430 149h1v1h-1zM430 166h1v1h-1zM430 183h1v1h-1zM430 199h1v1h-1zM430 216h1v1h-1zM430 233h1v1h-1zM430 249h1v1h-1zM430 266h1v1h-1zM430 283h1v1h-1zM430 299h1v1h-1zM430 316h1v1h-1zM430 333h1v1h-1zM430 349h1v1h-1zM430 366h1v1h-1zM430 383h1v1h-1zM430 399h1v1h-1zM430 416h1v1h-1zM430 433h1v1h-1zM430 449h1v1h-1zM430 466h1v1h-1zM430 483h1v1h-1zM430 499h1v1h-1zM430 516h1v1h-1zM430 533h1v1h-1zM430 549h1v1h-1zM447 16h1v1h-1zM447 33h1v1h-1zM447 49h1v1h-1zM447 66h1v1h-1zM447 83h1v1h-1zM447 99h1v1h-1zM447 116h1v1h-1zM447 133h1v1h-1zM447 149h1v1h-1zM447 166h1v1h-1zM447 183h1v1h-1zM447 199h1v1h-1zM447 216h1v1h-1zM447 233h1v1h-1zM447 249h1v1h-1zM447 266h1v1h-1zM447 283h1v1h-1zM447 299h1v1h-1zM447 316h1v1h-1zM447 333h1v1h-1zM447 349h1v1h-1zM447 366h1v1h-1zM447 383h1v1h-1zM447 399h1v1h-1zM447 416h1v1h-1zM447 433h1v1h-1zM447 449h1v1h-1zM447 466h1v1h-1zM447 483h1v1h-1zM447 499h1v1h-1zM447 516h1v1h-1zM447 533h1v1h-1zM447 549h1v1h-1zM463 16h1v1h-1zM463 33h1v1h-1zM463 49h1v1h-1zM463 66h1v1h-1zM463 83h1v1h-1zM463 99h1v1h-1zM463 116h1v1h-1zM463 133h1v1h-1zM463 149h1v1h-1zM463 166h1v1h-1zM463 183h1v1h-1zM463 199h1v1h-1zM463 216h1v1h-1zM463 233h1v1h-1zM463 249h1v1h-1zM463 266h1v1h-1zM463 283h1v1h-1zM463 299h1v1h-1zM463 316h1v1h-1zM463 333h1v1h-1zM463 349h1v1h-1zM463 366h1v1h-1zM463 383h1v1h-1zM463 399h1v1h-1zM463 416h1v1h-1zM463 433h1v1h-1zM463 449h1v1h-1zM463 466h1v1h-1zM463 483h1v1h-1zM463 499h1v1h-1zM463 516h1v1h-1zM463 533h1v1h-1zM463 549h1v1h-1zM480 16h1v1h-1zM480 33h1v1h-1zM480 49h1v1h-1zM480 66h1v1h-1zM480 83h1v1h-1zM480 99h1v1h-1zM480 116h1v1h-1zM480 133h1v1h-1zM480 149h1v1h-1zM480 166h1v1h-1zM480 183h1v1h-1zM480 199h1v1h-1zM480 216h1v1h-1zM480 233h1v1h-1zM480 249h1v1h-1zM480 266h1v1h-1zM480 283h1v1h-1zM480 299h1v1h-1zM480 316h1v1h-1zM480 333h1v1h-1zM480 349h1v1h-1zM480 366h1v1h-1zM480 383h1v1h-1zM480 399h1v1h-1zM480 416h1v1h-1zM480 433h1v1h-1zM480 449h1v1h-1zM480 466h1v1h-1zM480 483h1v1h-1zM480 499h1v1h-1zM480 516h1v1h-1zM480 533h1v1h-1zM480 549h1v1h-1zM497 16h1v1h-1zM497 33h1v1h-1zM497 49h1v1h-1zM497 66h1v1h-1zM497 83h1v1h-1zM497 99h1v1h-1zM497 116h1v1h-1zM497 133h1v1h-1zM497 149h1v1h-1zM497 166h1v1h-1zM497 183h1v1h-1zM497 199h1v1h-1zM497 216h1v1h-1zM497 233h1v1h-1zM497 249h1v1h-1zM497 266h1v1h-1zM497 283h1v1h-1zM497 299h1v1h-1zM497 316h1v1h-1zM497 333h1v1h-1zM497 349h1v1h-1zM497 366h1v1h-1zM497 383h1v1h-1zM497 399h1v1h-1zM497 416h1v1h-1zM497 433h1v1h-1zM497 449h1v1h-1zM497 466h1v1h-1zM497 483h1v1h-1zM497 499h1v1h-1zM497 516h1v1h-1zM497 533h1v1h-1zM497 549h1v1h-1zM513 16h1v1h-1zM513 33h1v1h-1zM513 49h1v1h-1zM513 66h1v1h-1zM513 83h1v1h-1zM513 99h1v1h-1zM513 116h1v1h-1zM513 133h1v1h-1zM513 149h1v1h-1zM513 166h1v1h-1zM513 183h1v1h-1zM513 199h1v1h-1zM513 216h1v1h-1zM513 233h1v1h-1zM513 249h1v1h-1zM513 266h1v1h-1zM513 283h1v1h-1zM513 299h1v1h-1zM513 316h1v1h-1zM513 333h1v1h-1zM513 349h1v1h-1zM513 366h1v1h-1zM513 383h1v1h-1zM513 399h1v1h-1zM513 416h1v1h-1zM513 433h1v1h-1zM513 449h1v1h-1zM513 466h1v1h-1zM513 483h1v1h-1zM513 499h1v1h-1zM513 516h1v1h-1zM513 533h1v1h-1zM513 549h1v1h-1zM530 16h1v1h-1zM530 33h1v1h-1zM530 49h1v1h-1zM530 66h1v1h-1zM530 83h1v1h-1zM530 99h1v1h-1zM530 116h1v1h-1zM530 133h1v1h-1zM530 149h1v1h-1zM530 166h1v1h-1zM530 183h1v1h-1zM530 199h1v1h-1zM530 216h1v1h-1zM530 233h1v1h-1zM530 249h1v1h-1zM530 266h1v1h-1zM530 283h1v1h-1zM530 299h1v1h-1zM530 316h1v1h-1zM530 333h1v1h-1zM530 349h1v1h-1zM530 366h1v1h-1zM530 383h1v1h-1zM530 399h1v1h-1zM530 416h1v1h-1zM530 433h1v1h-1zM530 449h1v1h-1zM530 466h1v1h-1zM530 483h1v1h-1zM530 499h1v1h-1zM530 516h1v1h-1zM530 533h1v1h-1zM530 549h1v1h-1zM547 16h1v1h-1zM547 33h1v1h-1zM547 49h1v1h-1zM547 66h1v1h-1zM547 83h1v1h-1zM547 99h1v1h-1zM547 116h1v1h-1zM547 133h1v1h-1zM547 149h1v1h-1zM547 166h1v1h-1zM547 183h1v1h-1zM547 199h1v1h-1zM547 216h1v1h-1zM547 233h1v1h-1zM547 249h1v1h-1zM547 266h1v1h-1zM547 283h1v1h-1zM547 299h1v1h-1zM547 316h1v1h-1zM547 333h1v1h-1zM547 349h1v1h-1zM547 366h1v1h-1zM547 383h1v1h-1zM547 399h1v1h-1zM547 416h1v1h-1zM547 433h1v1h-1zM547 449h1v1h-1zM547 466h1v1h-1zM547 483h1v1h-1zM547 499h1v1h-1zM547 516h1v1h-1zM547 533h1v1h-1zM547 549h1v1h-1zM563 16h1v1h-1zM563 33h1v1h-1zM563 49h1v1h-1zM563 66h1v1h-1zM563 83h1v1h-1zM563 99h1v1h-1zM563 116h1v1h-1zM563 133h1v1h-1zM563 149h1v1h-1zM563 166h1v1h-1zM563 183h1v1h-1zM563 199h1v1h-1zM563 216h1v1h-1zM563 233h1v1h-1zM563 249h1v1h-1zM563 266h1v1h-1zM563 283h1v1h-1zM563 299h1v1h-1zM563 316h1v1h-1zM563 333h1v1h-1zM563 349h1v1h-1zM563 366h1v1h-1zM563 383h1v1h-1zM563 399h1v1h-1zM563 416h1v1h-1zM563 433h1v1h-1zM563 449h1v1h-1zM563 466h1v1h-1zM563 483h1v1h-1zM563 499h1v1h-1zM563 516h1v1h-1zM563 533h1v1h-1zM563 549h1v1h-1zM580 16h1v1h-1zM580 33h1v1h-1zM580 49h1v1h-1zM580 66h1v1h-1zM580 83h1v1h-1zM580 99h1v1h-1zM580 116h1v1h-1zM580 133h1v1h-1zM580 149h1v1h-1zM580 166h1v1h-1zM580 183h1v1h-1zM580 199h1v1h-1zM580 216h1v1h-1zM580 233h1v1h-1zM580 249h1v1h-1zM580 266h1v1h-1zM580 283h1v1h-1zM580 299h1v1h-1zM580 316h1v1h-1zM580 333h1v1h-1zM580 349h1v1h-1zM580 366h1v1h-1zM580 383h1v1h-1zM580 399h1v1h-1zM580 416h1v1h-1zM580 433h1v1h-1zM580 449h1v1h-1zM580 466h1v1h-1zM580 483h1v1h-1zM580 499h1v1h-1zM580 516h1v1h-1zM580 533h1v1h-1zM580 549h1v1h-1zM597 16h1v1h-1zM597 33h1v1h-1zM597 49h1v1h-1zM597 66h1v1h-1zM597 83h1v1h-1zM597 99h1v1h-1zM597 116h1v1h-1zM597 133h1v1h-1zM597 149h1v1h-1zM597 166h1v1h-1zM597 183h1v1h-1zM597 199h1v1h-1zM597 216h1v1h-1zM597 233h1v1h-1zM597 249h1v1h-1zM597 266h1v1h-1zM597 283h1v1h-1zM597 299h1v1h-1zM597 316h1v1h-1zM597 333h1v1h-1zM597 349h1v1h-1zM597 366h1v1h-1zM597 383h1v1h-1zM597 399h1v1h-1zM597 416h1v1h-1zM597 433h1v1h-1zM597 449h1v1h-1zM597 466h1v1h-1zM597 483h1v1h-1zM597 499h1v1h-1zM597 516h1v1h-1zM597 533h1v1h-1zM597 549h1v1h-1zM613 16h1v1h-1zM613 33h1v1h-1zM613 49h1v1h-1zM613 66h1v1h-1zM613 83h1v1h-1zM613 99h1v1h-1zM613 116h1v1h-1zM613 133h1v1h-1zM613 149h1v1h-1zM613 166h1v1h-1zM613 183h1v1h-1zM613 199h1v1h-1zM613 216h1v1h-1zM613 233h1v1h-1zM613 249h1v1h-1zM613 266h1v1h-1zM613 283h1v1h-1zM613 299h1v1h-1zM613 316h1v1h-1zM613 333h1v1h-1zM613 349h1v1h-1zM613 366h1v1h-1zM613 383h1v1h-1zM613 399h1v1h-1zM613 416h1v1h-1zM613 433h1v1h-1zM613 449h1v1h-1zM613 466h1v1h-1zM613 483h1v1h-1zM613 499h1v1h-1zM613 516h1v1h-1zM613 533h1v1h-1zM613 549h1v1h-1zM630 16h1v1h-1zM630 33h1v1h-1zM630 49h1v1h-1zM630 66h1v1h-1zM630 83h1v1h-1zM630 99h1v1h-1zM630 116h1v1h-1zM630 133h1v1h-1zM630 149h1v1h-1zM630 166h1v1h-1zM630 183h1v1h-1zM630 199h1v1h-1zM630 216h1v1h-1zM630 233h1v1h-1zM630 249h1v1h-1zM630 266h1v1h-1zM630 283h1v1h-1zM630 299h1v1h-1zM630 316h1v1h-1zM630 333h1v1h-1zM630 349h1v1h-1zM630 366h1v1h-1zM630 383h1v1h-1zM630 399h1v1h-1zM630 416h1v1h-1zM630 433h1v1h-1zM630 449h1v1h-1zM630 466h1v1h-1zM630 483h1v1h-1zM630 499h1v1h-1zM630 516h1v1h-1zM630 533h1v1h-1zM630 549h1v1h-1zM647 16h1v1h-1zM647 33h1v1h-1zM647 49h1v1h-1zM647 66h1v1h-1zM647 83h1v1h-1zM647 99h1v1h-1zM647 116h1v1h-1zM647 133h1v1h-1zM647 149h1v1h-1zM647 166h1v1h-1zM647 183h1v1h-1zM647 199h1v1h-1zM647 216h1v1h-1zM647 233h1v1h-1zM647 249h1v1h-1zM647 266h1v1h-1zM647 283h1v1h-1zM647 299h1v1h-1zM647 316h1v1h-1zM647 333h1v1h-1zM647 349h1v1h-1zM647 366h1v1h-1zM647 383h1v1h-1zM647 399h1v1h-1zM647 416h1v1h-1zM647 433h1v1h-1zM647 449h1v1h-1zM647 466h1v1h-1zM647 483h1v1h-1zM647 499h1v1h-1zM647 516h1v1h-1zM647 533h1v1h-1zM647 549h1v1h-1zM663 16h1v1h-1zM663 33h1v1h-1zM663 49h1v1h-1zM663 66h1v1h-1zM663 83h1v1h-1zM663 99h1v1h-1zM663 116h1v1h-1zM663 133h1v1h-1zM663 149h1v1h-1zM663 166h1v1h-1zM663 183h1v1h-1zM663 199h1v1h-1zM663 216h1v1h-1zM663 233h1v1h-1zM663 249h1v1h-1zM663 266h1v1h-1zM663 283h1v1h-1zM663 299h1v1h-1zM663 316h1v1h-1zM663 333h1v1h-1zM663 349h1v1h-1zM663 366h1v1h-1zM663 383h1v1h-1zM663 399h1v1h-1zM663 416h1v1h-1zM663 433h1v1h-1zM663 449h1v1h-1zM663 466h1v1h-1zM663 483h1v1h-1zM663 499h1v1h-1zM663 516h1v1h-1zM663 533h1v1h-1zM663 549h1v1h-1zM680 16h1v1h-1zM680 33h1v1h-1zM680 49h1v1h-1zM680 66h1v1h-1zM680 83h1v1h-1zM680 99h1v1h-1zM680 116h1v1h-1zM680 133h1v1h-1zM680 149h1v1h-1zM680 166h1v1h-1zM680 183h1v1h-1zM680 199h1v1h-1zM680 216h1v1h-1zM680 233h1v1h-1zM680 249h1v1h-1zM680 266h1v1h-1zM680 283h1v1h-1zM680 299h1v1h-1zM680 316h1v1h-1zM680 333h1v1h-1zM680 349h1v1h-1zM680 366h1v1h-1zM680 383h1v1h-1zM680 399h1v1h-1zM680 416h1v1h-1zM680 433h1v1h-1zM680 449h1v1h-1zM680 466h1v1h-1zM680 483h1v1h-1zM680 499h1v1h-1zM680 516h1v1h-1zM680 533h1v1h-1zM680 549h1v1h-1zM697 16h1v1h-1zM697 33h1v1h-1zM697 49h1v1h-1zM697 66h1v1h-1zM697 83h1v1h-1zM697 99h1v1h-1zM697 116h1v1h-1zM697 133h1v1h-1zM697 149h1v1h-1zM697 166h1v1h-1zM697 183h1v1h-1zM697 199h1v1h-1zM697 216h1v1h-1zM697 233h1v1h-1zM697 249h1v1h-1zM697 266h1v1h-1zM697 283h1v1h-1zM697 299h1v1h-1zM697 316h1v1h-1zM697 333h1v1h-1zM697 349h1v1h-1zM697 366h1v1h-1zM697 383h1v1h-1zM697 399h1v1h-1zM697 416h1v1h-1zM697 433h1v1h-1zM697 449h1v1h-1zM697 466h1v1h-1zM697 483h1v1h-1zM697 499h1v1h-1zM697 516h1v1h-1zM697 533h1v1h-1zM697 549h1v1h-1z" fill="#5a5a66"/><rect x="80" y="0" width="1" height="554" fill="#2c2a2e"/><rect x="247" y="0" width="1" height="554" fill="#2c2a2e"/><rect x="413" y="0" width="1" height="554" fill="#2c2a2e"/><rect x="580" y="0" width="1" height="554" fill="#2c2a2e"/><rect x="0" y="66" width="706" height="1" fill="#2c2a2e"/><rect x="0" y="233" width="706" height="1" fill="#2c2a2e"/><rect x="0" y="399" width="706" height="1" fill="#2c2a2e"/><path d="M0 554 V393.8 Q3 394.5 3 398.5 V554Z" fill="#850085"/><path d="M0 406 V393.8 Q3 394.5 3 398.5 V406Z" fill="#a000b0"/><line x1="297.5" y1="283.3" x2="528" y2="0" stroke="#6e6c52" stroke-width="1"/><path d="M-5 483 H97" stroke="#e60000" stroke-width="15.5" stroke-linecap="round"/><rect x="-5" y="475" width="102" height="15.5" fill="#e60000"/><g transform="translate(96.80 482.60) rotate(-44.971)"><clipPath id="hc"><rect x="-7.75" y="-7.75" width="290.7341691685243" height="15.5" rx="7.75"/></clipPath><g clip-path="url(#hc)" stroke="#ff0000" stroke-width="1" fill="none"><rect x="-7.25" y="-7.25" width="289.9841691685243" height="14.5" rx="7"/><line x1="-8" y1="-2.42" x2="282.9841691685243" y2="-2.42"/><line x1="-8" y1="2.42" x2="282.9841691685243" y2="2.42"/><line x1="-7.50" y1="-7.75" x2="-7.50" y2="7.75"/><line x1="-1.85" y1="-7.75" x2="-1.85" y2="7.75"/><line x1="3.80" y1="-7.75" x2="3.80" y2="7.75"/><line x1="9.45" y1="-7.75" x2="9.45" y2="7.75"/><line x1="15.10" y1="-7.75" x2="15.10" y2="7.75"/><line x1="20.75" y1="-7.75" x2="20.75" y2="7.75"/><line x1="26.40" y1="-7.75" x2="26.40" y2="7.75"/><line x1="32.05" y1="-7.75" x2="32.05" y2="7.75"/><line x1="37.70" y1="-7.75" x2="37.70" y2="7.75"/><line x1="43.35" y1="-7.75" x2="43.35" y2="7.75"/><line x1="49.00" y1="-7.75" x2="49.00" y2="7.75"/><line x1="54.65" y1="-7.75" x2="54.65" y2="7.75"/><line x1="60.30" y1="-7.75" x2="60.30" y2="7.75"/><line x1="65.95" y1="-7.75" x2="65.95" y2="7.75"/><line x1="71.60" y1="-7.75" x2="71.60" y2="7.75"/><line x1="77.25" y1="-7.75" x2="77.25" y2="7.75"/><line x1="82.90" y1="-7.75" x2="82.90" y2="7.75"/><line x1="88.55" y1="-7.75" x2="88.55" y2="7.75"/><line x1="94.20" y1="-7.75" x2="94.20" y2="7.75"/><line x1="99.85" y1="-7.75" x2="99.85" y2="7.75"/><line x1="105.50" y1="-7.75" x2="105.50" y2="7.75"/><line x1="111.15" y1="-7.75" x2="111.15" y2="7.75"/><line x1="116.80" y1="-7.75" x2="116.80" y2="7.75"/><line x1="122.45" y1="-7.75" x2="122.45" y2="7.75"/><line x1="128.10" y1="-7.75" x2="128.10" y2="7.75"/><line x1="133.75" y1="-7.75" x2="133.75" y2="7.75"/><line x1="139.40" y1="-7.75" x2="139.40" y2="7.75"/><line x1="145.05" y1="-7.75" x2="145.05" y2="7.75"/><line x1="150.70" y1="-7.75" x2="150.70" y2="7.75"/><line x1="156.35" y1="-7.75" x2="156.35" y2="7.75"/><line x1="162.00" y1="-7.75" x2="162.00" y2="7.75"/><line x1="167.65" y1="-7.75" x2="167.65" y2="7.75"/><line x1="173.30" y1="-7.75" x2="173.30" y2="7.75"/><line x1="178.95" y1="-7.75" x2="178.95" y2="7.75"/><line x1="184.60" y1="-7.75" x2="184.60" y2="7.75"/><line x1="190.25" y1="-7.75" x2="190.25" y2="7.75"/><line x1="195.90" y1="-7.75" x2="195.90" y2="7.75"/><line x1="201.55" y1="-7.75" x2="201.55" y2="7.75"/><line x1="207.20" y1="-7.75" x2="207.20" y2="7.75"/><line x1="212.85" y1="-7.75" x2="212.85" y2="7.75"/><line x1="218.50" y1="-7.75" x2="218.50" y2="7.75"/><line x1="224.15" y1="-7.75" x2="224.15" y2="7.75"/><line x1="229.80" y1="-7.75" x2="229.80" y2="7.75"/><line x1="235.45" y1="-7.75" x2="235.45" y2="7.75"/><line x1="241.10" y1="-7.75" x2="241.10" y2="7.75"/><line x1="246.75" y1="-7.75" x2="246.75" y2="7.75"/><line x1="252.40" y1="-7.75" x2="252.40" y2="7.75"/><line x1="258.05" y1="-7.75" x2="258.05" y2="7.75"/><line x1="263.70" y1="-7.75" x2="263.70" y2="7.75"/><line x1="269.35" y1="-7.75" x2="269.35" y2="7.75"/><line x1="275.00" y1="-7.75" x2="275.00" y2="7.75"/><line x1="280.65" y1="-7.75" x2="280.65" y2="7.75"/></g></g><circle cx="297.5" cy="283.3" r="24.8" fill="#b4b4b4"/><path d="M297.20000000000005 271.2 A12.3 12.3 0 0 0 297.20000000000005 295.8Z" fill="#b87a0c"/><path d="M297.20000000000005 271.2 A12.3 12.3 0 0 1 297.20000000000005 295.8Z" fill="#6fc6e2"/><circle cx="297.20000000000005" cy="283.5" r="12.3" fill="none" stroke="#3a3020" stroke-width="1" stroke-dasharray="1.5 1.5"/><line x1="297.5" y1="283.3" x2="337.5" y2="234.3" stroke="#6e6c52" stroke-width="1"/><rect x="247" y="283" width="100" height="1.3" fill="#00ff00"/><rect x="297" y="233" width="1.3" height="100" fill="#00ff00"/><path transform="translate(293.5 280.5)" d="M0 0 L0 17.2 L4.3 13.3 L7.4 19.8 L9.9 18.7 L6.9 12.3 L12 12.3Z" fill="#fff" stroke="#000" stroke-width="1.1" stroke-linejoin="miter"/></svg>
<div style="left:450.5px;top:58px;width:400.0px;height:27.5px;background:#3f3f3f;border-radius:5px;"></div>
<svg style="position:absolute;left:0;top:0" width="1007" height="100"><path d="M461.2 66.3 Q467.5 65.3 473.8 66.3 V68 L469.6 72.3 V77.2 H465.4 V72.3 L461.2 68Z" fill="#a8dcea" stroke="#5e9cb0" stroke-width="0.5"/><path d="M466.6 72.8 V76.6" stroke="#eef8fb" stroke-width="1.2"/><path d="M462.5 67.3 H472.5" stroke="#dff2f7" stroke-width="0.8"/><path d="M488.6 67.3 L490.6 66.0 V68.6Z" fill="#9ed0d8"/><path d="M488.6 71.6 L490.6 70.3 V72.89999999999999Z" fill="#9ed0d8"/><path d="M488.6 75.9 L490.6 74.60000000000001 V77.2Z" fill="#9ed0d8"/><path d="M492.5 67.9 H497.8 A4 4 0 0 1 501.8 71.9" fill="none" stroke="#5c9ae0" stroke-width="2.8"/><path d="M501.8 71.9 A4 4 0 0 1 497.8 75.9 H492.5" fill="none" stroke="#e6808c" stroke-width="2.8"/><path d="M523.4 65.2 V77.6 M517 71.4 H529.8" stroke="#6c9ae2" stroke-width="1.2"/><path d="M522.3 66.4 L523.4 65.1 L524.5 66.4Z M522.3 76.4 L523.4 77.7 L524.5 76.4Z M518.2 70.3 L516.9 71.4 L518.2 72.5Z M528.6 70.3 L529.9 71.4 L528.6 72.5Z" fill="#6c9ae2" stroke="#6c9ae2" stroke-width="0.6"/><path d="M537 80 V85 H532Z" fill="#d4d4d4"/><path d="M545.5 66 H559 M545.5 78.8 H559 M545.5 66 V78.8 M559 66 V78.8" fill="none" stroke="#6e9cf0" stroke-width="1.5" stroke-dasharray="2.4 1.3"/><g fill="#6e9cf0"><rect x="544.75" y="65.25" width="2" height="2"/><rect x="557.75" y="65.25" width="2" height="2"/><rect x="544.75" y="77.55" width="2" height="2"/><rect x="557.75" y="77.55" width="2" height="2"/></g><path d="M565 80 V85 H560Z" fill="#d4d4d4"/><rect x="574" y="69" width="3.4" height="6" fill="#e87a82"/><rect x="583" y="69" width="3.2" height="6" fill="#e87a82"/><rect x="577.8" y="65.8" width="4.6" height="9" fill="#a8d8ec" stroke="#6ab0d0" stroke-width="0.5"/><rect x="574" y="76" width="12.2" height="1.9" fill="#6ea6e4"/><path d="M593 80 V85 H588Z" fill="#d4d4d4"/><rect x="594" y="64" width="1" height="15.5" fill="#222"/><rect x="604" y="63.8" width="1" height="2.8" fill="#a8c8d6"/><rect x="604" y="76.2" width="1" height="2.8" fill="#a8c8d6"/><rect x="600.8" y="67" width="2.9" height="1" fill="#a8c8d6"/><rect x="613.3" y="67" width="2.9" height="1" fill="#a8c8d6"/><rect x="606" y="63.8" width="1" height="2.8" fill="#a8c8d6"/><rect x="606" y="76.2" width="1" height="2.8" fill="#a8c8d6"/><rect x="600.8" y="69" width="2.9" height="1" fill="#a8c8d6"/><rect x="613.3" y="69" width="2.9" height="1" fill="#a8c8d6"/><rect x="608" y="63.8" width="1" height="2.8" fill="#a8c8d6"/><rect x="608" y="76.2" width="1" height="2.8" fill="#a8c8d6"/><rect x="600.8" y="71" width="2.9" height="1" fill="#a8c8d6"/><rect x="613.3" y="71" width="2.9" height="1" fill="#a8c8d6"/><rect x="610" y="63.8" width="1" height="2.8" fill="#a8c8d6"/><rect x="610" y="76.2" width="1" height="2.8" fill="#a8c8d6"/><rect x="600.8" y="73" width="2.9" height="1" fill="#a8c8d6"/><rect x="613.3" y="73" width="2.9" height="1" fill="#a8c8d6"/><rect x="612" y="63.8" width="1" height="2.8" fill="#a8c8d6"/><rect x="612" y="76.2" width="1" height="2.8" fill="#a8c8d6"/><rect x="600.8" y="75" width="2.9" height="1" fill="#a8c8d6"/><rect x="613.3" y="75" width="2.9" height="1" fill="#a8c8d6"/><rect x="603.7" y="66.6" width="9.6" height="9.6" fill="#c9d2da" stroke="#2a2a2a" stroke-width="0.6"/><path d="M604.4 75.6 V67.3 H612.6" fill="none" stroke="#eef4f6" stroke-width="1"/><path d="M612.6 67.3 V75.6 H604.4" fill="none" stroke="#a8c0cc" stroke-width="0.8"/><path d="M622 80 V85 H617Z" fill="#d4d4d4"/><path d="M630.6 73.2 V66.4 H636.5" fill="none" stroke="#e0a420" stroke-width="1.4"/><path d="M636 64.2 L639 66.4 L636 68.6Z" fill="#e0a420"/><path d="M632.8 75.9 L639.8 69.4" stroke="#6a90cc" stroke-width="1.5"/><circle cx="631.6" cy="77.4" r="1.9" fill="none" stroke="#e0a420" stroke-width="1.2"/><circle cx="641.3" cy="67.8" r="1.9" fill="none" stroke="#e0a420" stroke-width="1.2"/><path d="M650 80 V85 H645Z" fill="#d4d4d4"/><path d="M659 75 V70 A2.3 2.3 0 0 1 663.6 70 V72.5 A1.9 1.9 0 0 0 667.4 72.5 V70 A2.3 2.3 0 0 1 672 70 V75" fill="none" stroke="#6c9ae2" stroke-width="1.5"/><circle cx="659.3" cy="75.8" r="1.8" fill="#3f3f3f" stroke="#e0a420" stroke-width="1.1"/><circle cx="671.3" cy="75.8" r="1.8" fill="#3f3f3f" stroke="#e0a420" stroke-width="1.1"/><path d="M678 80 V85 H673Z" fill="#d4d4d4"/><rect x="689" y="74" width="4" height="6" fill="#f0a040"/><rect x="690.2" y="75" width="1.6" height="4.5" fill="#fff0c0"/><rect x="695" y="68.3" width="6" height="3" fill="#20a020"/><circle cx="690.8" cy="70" r="5.1" fill="#f0c818" stroke="#c09010" stroke-width="0.5"/><circle cx="690.8" cy="70" r="3.4" fill="none" stroke="#f8e070" stroke-width="0.8"/><circle cx="690.8" cy="70" r="1.5" fill="#1a2030"/><path d="M706 80 V85 H701Z" fill="#d4d4d4"/><path d="M713.6 77.3 V70.6 H719.3 V66.5 H728.2 V77.3Z" fill="#c6e2ee" stroke="#7aaed8" stroke-width="1"/><path d="M714.6 76.3 V71.6 H720.3 V67.5 H727.2" fill="none" stroke="#f4fbfd" stroke-width="0.8"/><path d="M734 80 V85 H729Z" fill="#d4d4d4"/><rect x="741.8" y="64.7" width="14.6" height="14.6" fill="none" stroke="#f0a0e0" stroke-width="1.4"/><path d="M746.3 74.3 L752.5 69.5" stroke="#6c9ae2" stroke-width="1.5"/><circle cx="745.6" cy="75" r="1.7" fill="none" stroke="#e0a420" stroke-width="1.1"/><circle cx="753" cy="69" r="1.7" fill="none" stroke="#e0a420" stroke-width="1.1"/><path d="M762 80 V85 H757Z" fill="#d4d4d4"/><path d="M770.8 67 V78.3 H783.3 V67" fill="none" stroke="#6c9ae2" stroke-width="1.5"/><circle cx="770.8" cy="66.2" r="1.7" fill="#3f3f3f" stroke="#e0a420" stroke-width="1.1"/><circle cx="783.2" cy="66.2" r="1.7" fill="#3f3f3f" stroke="#e0a420" stroke-width="1.1"/><text x="777" y="76.5" font-family="Liberation Serif" font-size="8.5" fill="#d8d8d8" text-anchor="middle" textLength="9" lengthAdjust="spacingAndGlyphs">10</text><path d="M790 80 V85 H785Z" fill="#d4d4d4"/><text x="805.4" y="78.8" font-family="Liberation Serif" font-size="19.5" fill="#5aa0e8" stroke="#5aa0e8" stroke-width="0.2" text-anchor="middle">A</text><path d="M827 78 L840 66" stroke="#5aa0e8" stroke-width="2"/><path d="M846 80 V85 H841Z" fill="#d4d4d4"/></svg>
<div style="left:301.5px;top:612.5px;width:44.5px;height:13.0px;background:#555555;border:1px solid #2a2a2a;border-radius:0 3px 3px 0;box-sizing:border-box;"></div>
<div style="left:301.5px;top:612.5px;width:24.5px;height:13.0px;background:#6fd6f8;border:1px solid #2a2a2a;box-sizing:border-box;"></div>
<div class="t" style="left:330.5px;top:613.69px;font-size:11px;line-height:11px;color:#e8e8e8;font-weight:normal;">LS</div>
<div style="left:351px;top:611px;width:34px;height:16px;background:#4e4e4e;border:1px solid #2e2e2e;border-radius:3px;box-sizing:border-box;"></div>
<div style="left:368.5px;top:612px;width:1.0px;height:14px;background:#2e2e2e;"></div>
<svg style="position:absolute;left:355px;top:613.5px" width="6" height="9" viewBox="0 0 6 9"><path d="M5.2 0.3 V8.7 L0.6 4.5Z" fill="#7c7c7c"/></svg>
<svg style="position:absolute;left:374px;top:613.5px" width="6" height="9" viewBox="0 0 6 9"><path d="M0.6 0.3 V8.7 L5.4 4.5Z" fill="#fff"/></svg>
<div style="left:389.3px;top:609px;width:82.19999999999999px;height:18.600000000000023px;background:#3a3a3a;border:1px solid #2c2c2c;border-top:none;border-radius:0 0 3px 3px;box-sizing:border-box;"></div>
<div style="left:396.3px;top:613px;width:10.0px;height:10px;background:#ff0000;border:1px solid #a0a0a0;box-sizing:border-box;"></div>
<div class="t" style="left:414.10px;top:612.98px;font-size:11.6px;line-height:11.6px;color:#dedede;font-weight:normal;transform:scaleX(0.8604);transform-origin:0 0;">[1] L1_TOP</div>
<div style="left:472px;top:609px;width:58px;height:18.600000000000023px;background:#4e4e4e;border:1px solid #2c2c2c;border-top:none;border-radius:0 0 3px 3px;box-sizing:border-box;"></div>
<div style="left:478px;top:613px;width:10px;height:10px;background:#6fd8fa;border:1px solid #a0a0a0;box-sizing:border-box;"></div>
<div class="t b" style="left:496.70px;top:612.98px;font-size:11.6px;line-height:11.6px;color:#f4f4f4;font-weight:bold;transform:scaleX(0.9137);transform-origin:0 0;">[3] L3</div>
<div style="left:531px;top:609px;width:84.60000000000002px;height:18.600000000000023px;background:#3a3a3a;border:1px solid #2c2c2c;border-top:none;border-radius:0 0 3px 3px;box-sizing:border-box;"></div>
<div style="left:537.4px;top:613px;width:10.0px;height:10px;background:#707070;border:1px solid #a0a0a0;box-sizing:border-box;"></div>
<div class="t" style="left:555.50px;top:612.98px;font-size:11.6px;line-height:11.6px;color:#7a7a7a;font-weight:normal;transform:scaleX(0.8719);transform-origin:0 0;">[4] L4_GND</div>
<div style="left:615.6px;top:609px;width:55.39999999999998px;height:18.600000000000023px;background:#3a3a3a;border:1px solid #2c2c2c;border-top:none;border-radius:0 0 3px 3px;box-sizing:border-box;"></div>
<div style="left:622.3px;top:613px;width:10.0px;height:10px;background:#00c060;border:1px solid #a0a0a0;box-sizing:border-box;"></div>
<div class="t" style="left:640.40px;top:612.98px;font-size:11.6px;line-height:11.6px;color:#dedede;font-weight:normal;transform:scaleX(0.8828);transform-origin:0 0;">[5] L5</div>
<div style="left:671px;top:609px;width:68px;height:18.600000000000023px;background:#3a3a3a;border:1px solid #2c2c2c;border-top:none;border-radius:0 0 3px 3px;box-sizing:border-box;"></div>
<div style="left:678px;top:613px;width:10px;height:10px;background:#00ffff;border:1px solid #a0a0a0;box-sizing:border-box;"></div>
<div class="t" style="left:696.30px;top:612.98px;font-size:11.6px;line-height:11.6px;color:#dedede;font-weight:normal;transform:scaleX(0.8883);transform-origin:0 0;">[10] L10</div>
<div style="left:739px;top:609px;width:119.29999999999995px;height:18.600000000000023px;background:#3a3a3a;border:1px solid #2c2c2c;border-top:none;border-radius:0 0 3px 3px;box-sizing:border-box;"></div>
<div style="left:746.4px;top:613px;width:10.0px;height:10px;background:#0000ff;border:1px solid #a0a0a0;box-sizing:border-box;"></div>
<div class="t" style="left:764.40px;top:612.98px;font-size:11.6px;line-height:11.6px;color:#dedede;font-weight:normal;transform:scaleX(0.8938);transform-origin:0 0;">[12] L12_BOTTOM</div>
<div style="left:858.3px;top:609px;width:66.30000000000007px;height:18.600000000000023px;background:#3a3a3a;border:1px solid #2c2c2c;border-top:none;border-radius:0 0 3px 3px;box-sizing:border-box;"></div>
<div style="left:865px;top:613px;width:10px;height:10px;background:#555555;border:1px solid #a0a0a0;box-sizing:border-box;"></div>
<div class="t" style="left:883.60px;top:612.98px;font-size:11.6px;line-height:11.6px;color:#7a7a7a;font-weight:normal;transform:scaleX(0.9785);transform-origin:0 0;">Bd Out</div>
<div style="left:924.6px;top:609px;width:115.39999999999998px;height:18.600000000000023px;background:#3a3a3a;border:1px solid #2c2c2c;border-top:none;border-radius:0 0 3px 3px;box-sizing:border-box;"></div>
<div style="left:930.8px;top:613px;width:10.0px;height:10px;background:#555555;border:1px solid #a0a0a0;box-sizing:border-box;"></div>
<div class="t" style="left:949.40px;top:612.98px;font-size:11.6px;line-height:11.6px;color:#7a7a7a;font-weight:normal;transform:scaleX(0.9654);transform-origin:0 0;">Mechanica</div>
<div style="left:1004px;top:609px;width:3px;height:24px;background:#3a3a3a;"></div>
<div class="t" style="left:5.10px;top:640.48px;font-size:11.6px;line-height:11.6px;color:#dcdcdc;font-weight:normal;transform:scaleX(0.9113);transform-origin:0 0;">X:110.3mm Y:60.7mm</div>
<div class="t" style="left:121.50px;top:640.48px;font-size:11.6px;line-height:11.6px;color:#dcdcdc;font-weight:normal;transform:scaleX(0.9342);transform-origin:0 0;">Grid: 0.1mm</div>
<div class="t" style="left:203.50px;top:640.48px;font-size:11.6px;line-height:11.6px;color:#dcdcdc;font-weight:normal;transform:scaleX(0.9799);transform-origin:0 0;">(Hotspot Snap)</div>
<div style="left:289px;top:639px;width:1px;height:16px;background:#2a2a2a;"></div>
<div class="t" style="left:294.30px;top:640.48px;font-size:11.6px;line-height:11.6px;color:#dcdcdc;font-weight:normal;transform:scaleX(0.9569);transform-origin:0 0;">Track 45:Push Obstacles [Width From: User Choice]</div>
<div style="left:553px;top:634.8px;width:251.29999999999995px;height:22.0px;background:transparent;border:2.4px solid #08e8f0;border-radius:5px;box-sizing:border-box;"></div>
<div class="t" style="left:556.40px;top:640.48px;font-size:11.6px;line-height:11.6px;color:#dcdcdc;font-weight:normal;transform:scaleX(0.9486);transform-origin:0 0;">[Via-Size From: Rule Preferred][μVia 1:2,μVia 2:3]</div>
<div class="t" style="left:804.80px;top:640.48px;font-size:11.6px;line-height:11.6px;color:#dcdcdc;font-weight:normal;transform:scaleX(0.9616);transform-origin:0 0;">Gloss: Strong</div>
<div style="left:905px;top:639px;width:1px;height:16px;background:#2a2a2a;"></div>
<div class="t" style="left:910.3px;top:640px;width:48px;overflow:hidden;font-size:11.3px;line-height:12px;color:#dcdcdc;">Net Length</div>
<div style="left:958.8px;top:639.2px;width:43.200000000000045px;height:16.299999999999955px;background:#474747;border:1px solid #2a2a2a;border-radius:3px;box-sizing:border-box;"></div>
<div class="t" style="left:964.40px;top:641.18px;font-size:11.6px;line-height:11.6px;color:#e8e8e8;font-weight:normal;transform:scaleX(0.9015);transform-origin:0 0;">Panels</div>
</body></html>
